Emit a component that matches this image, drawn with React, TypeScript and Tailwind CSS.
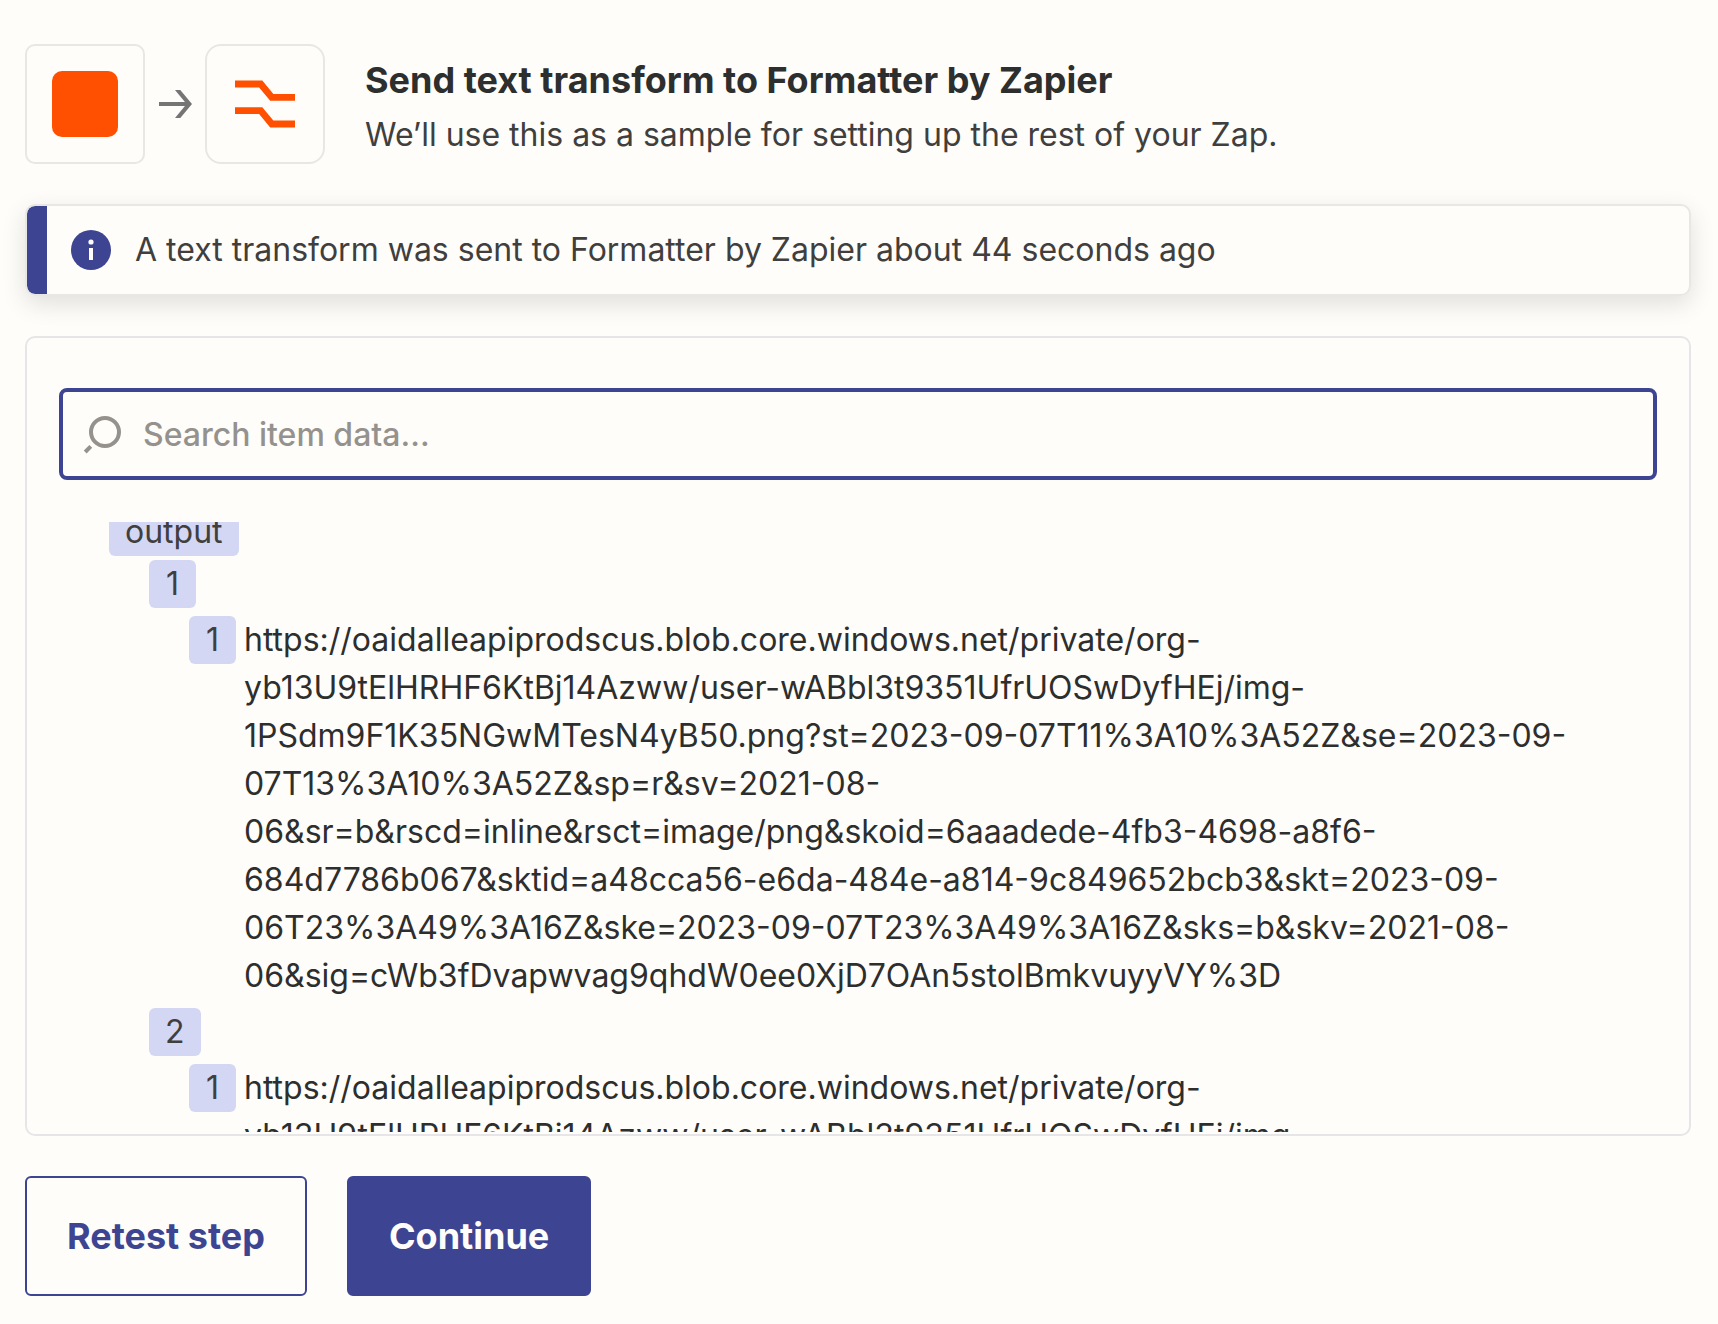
import { useLayoutEffect, useRef } from "react";
import type { ReactNode } from "react";

interface OutputItem {
  index: number;
  url: string;
}

const OUTPUT_ITEMS: OutputItem[] = [
  {
    index: 1,
    url: "https://oaidalleapiprodscus.blob.core.windows.net/private/org-yb13U9tElHRHF6KtBj14Azww/user-wABbl3t9351UfrUOSwDyfHEj/img-1PSdm9F1K35NGwMTesN4yB50.png?st=2023-09-07T11%3A10%3A52Z&se=2023-09-07T13%3A10%3A52Z&sp=r&sv=2021-08-06&sr=b&rscd=inline&rsct=image/png&skoid=6aaadede-4fb3-4698-a8f6-684d7786b067&sktid=a48cca56-e6da-484e-a814-9c849652bcb3&skt=2023-09-06T23%3A49%3A16Z&ske=2023-09-07T23%3A49%3A16Z&sks=b&skv=2021-08-06&sig=cWb3fDvapwvag9qhdW0ee0XjD7OAn5stolBmkvuyyVY%3D",
  },
  {
    index: 2,
    url: "https://oaidalleapiprodscus.blob.core.windows.net/private/org-yb13U9tElHRHF6KtBj14Azww/user-wABbl3t9351UfrUOSwDyfHEj/img-",
  },
];

// the list opens slightly scrolled
const INITIAL_SCROLL = 14;

function ArrowIcon() {
  return (
    <svg width="60" height="40" viewBox="0 0 60 40" fill="#757575" className="shrink-0" aria-hidden="true">
      <path d="M14 18H44V22H14Z" />
      <path d="M30 6H35.3L47 20L35.3 34H30L41.6 20Z" />
    </svg>
  );
}

function FormatterIcon() {
  return (
    <svg width="80" height="80" viewBox="0 0 80 80" fill="none" aria-hidden="true">
      <path
        d="M10 20H35.7L46.8 33.4H70M10 46.6H35.7L46.8 60H70"
        stroke="#ff4f00"
        strokeWidth="6.8"
      />
    </svg>
  );
}

function InfoIcon() {
  return (
    <svg width="40" height="40" viewBox="0 0 40 40" className="shrink-0" aria-hidden="true">
      <circle cx="20" cy="20" r="20" fill="#3d4592" />
      <circle cx="20" cy="12" r="2.6" fill="#fffdf9" />
      <rect x="18" y="18" width="4" height="12" fill="#fffdf9" />
    </svg>
  );
}

function SearchIcon() {
  return (
    <svg width="40" height="40" viewBox="0 0 40 40" fill="none" className="shrink-0" aria-hidden="true">
      <circle cx="22" cy="18" r="14" stroke="#95928e" strokeWidth="4" />
      <path d="M2.2 38L7.8 32.4" stroke="#95928e" strokeWidth="4" />
    </svg>
  );
}

function Tag({ children }: { children: ReactNode }) {
  return (
    <span className="h-12 min-w-[47px] shrink-0 rounded-md bg-[#d3d7f4] px-4 text-center text-[#403f3e]">
      {children}
    </span>
  );
}

export default function App() {
  const listRef = useRef<HTMLDivElement>(null);

  useLayoutEffect(() => {
    if (listRef.current) listRef.current.scrollTop = INITIAL_SCROLL;
  }, []);

  return (
    <main className="min-h-screen bg-[#fffdf9] pt-11 pr-[27px] pb-7 pl-[25px] font-['Inter',sans-serif] text-[32px] leading-12 text-[#403f3e]">
      <header className="flex items-center">
        <div className="flex size-[120px] shrink-0 items-center justify-center rounded-[10px] border-2 border-[#e8e7e4]">
          <div className="size-[66px] rounded-[10px] bg-[#ff4f00]" />
        </div>
        <ArrowIcon />
        <div className="flex size-[120px] shrink-0 items-center justify-center rounded-2xl border-2 border-[#e8e7e4]">
          <FormatterIcon />
        </div>
        <div className="ml-10">
          <h1 className="text-[36px] leading-[62px] font-bold text-[#2d2e2e]">
            Send text transform to Formatter by Zapier
          </h1>
          <p>We’ll use this as a sample for setting up the rest of your Zap.</p>
        </div>
      </header>

      <div
        role="status"
        className="mt-10 flex h-[92px] items-center overflow-hidden rounded-[10px] border-2 border-[#e8e7e4] shadow-[0_8px_24px_rgba(0,0,0,0.12)]"
      >
        <div className="h-full w-5 shrink-0 rounded-l-lg bg-[#3d4592]" />
        <div className="flex items-center gap-6 pl-6">
          <InfoIcon />
          <p>A text transform was sent to Formatter by Zapier about 44 seconds ago</p>
        </div>
      </div>

      <section className="mt-10 rounded-[10px] border-2 border-[#e6e6e8] px-8 pt-[50px] pb-0.5">
        <label className="flex h-[92px] items-center gap-5 rounded-lg border-4 border-[#3d4592] pl-5">
          <SearchIcon />
          <input
            type="text"
            aria-label="Search item data"
            placeholder="Search item data..."
            className="min-w-0 flex-1 bg-transparent pt-0.5 font-medium outline-none placeholder:text-[#95928e]"
          />
        </label>

        <div
          ref={listRef}
          className="mt-[42px] h-[610px] overflow-y-auto pr-10 pl-[50px] text-[#2d2e2e] [scrollbar-width:none]"
        >
          <div className="flex">
            <Tag>output</Tag>
          </div>
          <ul className="mt-1 space-y-2 pl-10">
            {OUTPUT_ITEMS.map((item) => (
              <li key={item.index} className="space-y-2">
                <div className="flex">
                  <Tag>{item.index}</Tag>
                </div>
                <div className="flex gap-2 pl-10">
                  <Tag>1</Tag>
                  <span className="min-w-0 break-words">{item.url}</span>
                </div>
              </li>
            ))}
          </ul>
        </div>
      </section>

      <div className="mt-10 flex gap-10 text-[36px] font-bold">
        <button
          type="button"
          className="h-[120px] rounded-md border-2 border-[#3d4592] px-10 text-[#3d4592]"
        >
          Retest step
        </button>
        <button
          type="button"
          className="h-[120px] rounded-md border-2 border-[#3d4592] bg-[#3d4592] px-10 text-[#fffdf9]"
        >
          Continue
        </button>
      </div>
    </main>
  );
}
